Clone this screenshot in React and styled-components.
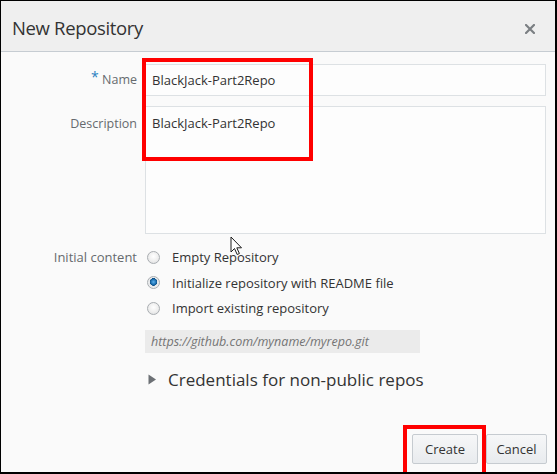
import React from 'react';
import styled, { createGlobalStyle } from 'styled-components';

const GlobalStyle = createGlobalStyle`
  html, body {
    margin: 0;
    padding: 0;
    background: #ffffff;
  }
  body {
    font-family: "Open Sans", "Noto Sans", sans-serif;
  }
`;

const options = [
  { id: 'empty', label: 'Empty Repository', checked: false },
  { id: 'readme', label: 'Initialize repository with README file', checked: true },
  { id: 'import', label: 'Import existing repository', checked: false },
];

const App = () => {
  return (
    <>
      <GlobalStyle />
      <Dialog>
        <Header>
          <Title>New Repository</Title>
          <Close aria-label="close">
            <svg width="10" height="10" viewBox="0 0 10 10">
              <path d="M1 1 L9 9 M9 1 L1 9" stroke="#7b7f83" strokeWidth="2.2" strokeLinecap="square" />
            </svg>
          </Close>
        </Header>
        <Body>
          <Form>
            <Label>
              <Required>*</Required> Name
            </Label>
            <TextInput>BlackJack-Part2Repo</TextInput>

            <Label $top>Description</Label>
            <TextArea>BlackJack-Part2Repo</TextArea>

            <Label $center>Initial content</Label>
            <RadioGroup>
              {options.map(opt => (
                <RadioRow key={opt.id}>
                  <Radio $checked={opt.checked} />
                  <span>{opt.label}</span>
                </RadioRow>
              ))}
              <UrlInput>https://github.com/myname/myrepo.git</UrlInput>
            </RadioGroup>

            <span />
            <Disclosure>
              <svg width="9" height="11" viewBox="0 0 9 11">
                <path d="M0.5 0.5 L8 5.5 L0.5 10.5 Z" fill="#6c7075" />
              </svg>
              Credentials for non-public repos
            </Disclosure>
          </Form>

          <Footer>
            <Button $w={66}>Create</Button>
            <Button $w={61}>Cancel</Button>
          </Footer>
        </Body>

        <Highlight style={{ left: 141, top: 57, width: 171, height: 103 }} />
        <Highlight style={{ left: 402, top: 424, width: 83, height: 52 }} />
        <Cursor width="14" height="21" viewBox="0 0 14 21">
          <path
            d="M1 1 L1 16 L4.5 12.5 L7.2 18.5 L9.4 17.5 L6.8 11.8 L11.5 11.8 Z"
            fill="#ffffff"
            stroke="#1d1d1d"
            strokeWidth="1"
            strokeLinejoin="miter"
          />
        </Cursor>
      </Dialog>
    </>
  );
};

const Dialog = styled.div`
  position: relative;
  box-sizing: border-box;
  width: 557px;
  height: 474px;
  border-style: solid;
  border-color: #000000;
  border-width: 1px 2px 2px 1px;
  background: #fafafa;
  display: flex;
  flex-direction: column;
  overflow: hidden;
`;

const Header = styled.div`
  height: 50px;
  flex-shrink: 0;
  background: #efefef;
  border-bottom: 1px solid #c6ccd2;
  display: flex;
  align-items: center;
  justify-content: space-between;
  padding: 0 20px 0 11px;
`;

const Title = styled.h1`
  margin: 0;
  font-size: 18.5px;
  font-weight: 400;
  color: #333333;
  letter-spacing: -0.35px;
  position: relative;
  top: 1px;
`;

const Close = styled.span`
  display: flex;
  align-items: center;
  position: relative;
  top: 3px;
`;

const Body = styled.div`
  flex: 1;
  display: flex;
  flex-direction: column;
  justify-content: space-between;
  padding: 12px 8px 8px 0;
`;

const Form = styled.div`
  display: grid;
  grid-template-columns: 136px 401px;
  column-gap: 8px;
  row-gap: 10px;
  align-items: start;
`;

const Label = styled.div`
  text-align: right;
  font-size: 12.5px;
  color: #666a6e;
  line-height: 32px;
  ${({ $top }) => $top && `
    line-height: 20px;
    padding-top: 8px;
  `}
  ${({ $center }) => $center && `
    font-size: 13px;
    line-height: 20px;
    padding-top: 3px;
  `}
`;

const Required = styled.span`
  color: #2a7fc0;
  font-size: 14px;
  vertical-align: top;
  line-height: 26px;
`;

const TextInput = styled.div`
  box-sizing: border-box;
  height: 32px;
  border: 1px solid #dde1e4;
  background: #fdfdfd;
  padding: 0 6px;
  font-size: 13px;
  line-height: 30px;
  color: #333333;
`;

const TextArea = styled(TextInput)`
  height: 128px;
  line-height: 20px;
  padding-top: 6px;
`;

const RadioGroup = styled.div`
  display: flex;
  flex-direction: column;
  gap: 5px;
  padding-top: 3px;
`;

const RadioRow = styled.div`
  display: flex;
  align-items: center;
  gap: 12px;
  height: 20.5px;
  padding-left: 2px;
  font-size: 13px;
  color: #333333;
`;

const Radio = styled.span`
  box-sizing: border-box;
  width: 13px;
  height: 13px;
  border-radius: 50%;
  border: 1px solid #a9adb1;
  background: ${({ $checked }) =>
    $checked
      ? 'radial-gradient(circle at 50% 45%, #5fb2ee 0, #1b6fb0 2.6px, #0f4f85 3.6px, #e6e8ea 4px, #f9f9f9 100%)'
      : 'radial-gradient(circle at 50% 40%, #ffffff 0, #eeeeee 55%, #d9dbdd 100%)'};
  flex-shrink: 0;
`;

const UrlInput = styled.div`
  box-sizing: border-box;
  width: 275px;
  height: 23px;
  margin-top: 6px;
  background: #ebebeb;
  padding: 0 6px;
  font-size: 12.5px;
  font-style: italic;
  line-height: 23px;
  color: #747474;
`;

const Disclosure = styled.div`
  display: flex;
  align-items: center;
  gap: 11px;
  padding: 5px 0 0 3px;
  font-size: 17px;
  color: #333333;
`;

const Footer = styled.div`
  display: flex;
  justify-content: flex-end;
  gap: 8px;
`;

const Button = styled.button`
  box-sizing: border-box;
  height: 30px;
  width: ${({ $w }) => $w}px;
  padding: 0;
  border: 1px solid #c6cbd0;
  border-radius: 2px;
  background: linear-gradient(#f6f7f8, #e8ebee);
  font-family: inherit;
  font-size: 13px;
  color: #333333;
`;

const Highlight = styled.div`
  position: absolute;
  box-sizing: border-box;
  border: 4px solid #ff0000;
  pointer-events: none;
`;

const Cursor = styled.svg`
  position: absolute;
  left: 229px;
  top: 235px;
`;

export default App;
